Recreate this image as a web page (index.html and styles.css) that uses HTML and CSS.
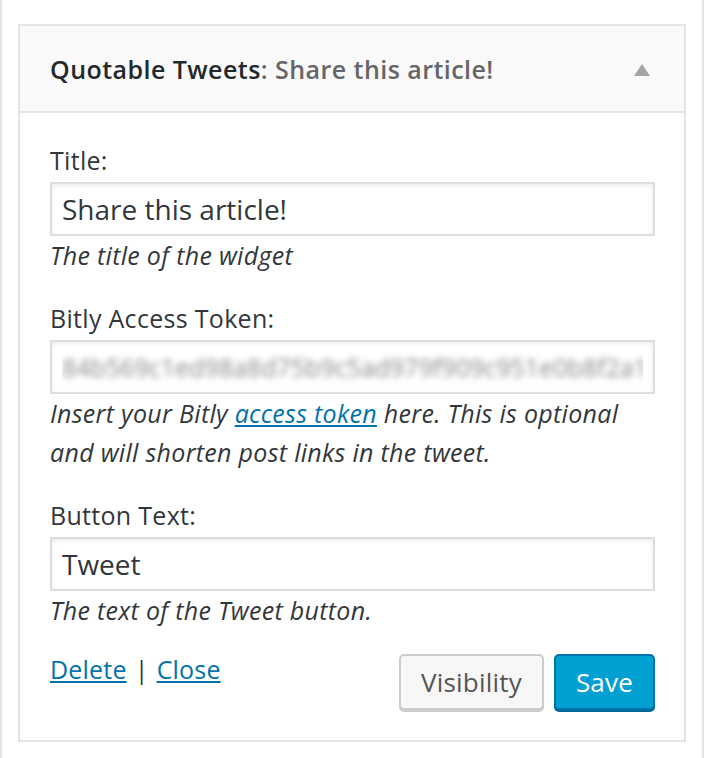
FILE: index.html
```html
<!DOCTYPE html>
<html>
<head>
<meta charset="utf-8">
<link rel="stylesheet" href="styles.css">
</head>
<body>
<div class="page">
  <div class="widget">
    <div class="widget-top">
      <h3 class="widget-title">Quotable Tweets<span class="in-title">: Share this article!</span></h3>
      <span class="arrow"></span>
    </div>
    <div class="widget-inside">
      <div class="field">
        <label class="label">Title:</label>
        <input class="input" type="text" value="Share this article!">
        <p class="desc">The title of the widget</p>
      </div>
      <div class="field">
        <label class="label">Bitly Access Token:</label>
        <input class="input input-blur" type="text" value="84b569c1ed98a8d75b9c5ad979f909c951e0b8f2a1c7e">
        <p class="desc">Insert your Bitly <a class="link" href="#">access token</a> here. This is optional and will shorten post links in the tweet.</p>
      </div>
      <div class="field">
        <label class="label">Button Text:</label>
        <input class="input" type="text" value="Tweet">
        <p class="desc">The text of the Tweet button.</p>
      </div>
      <div class="footer">
        <div class="links"><a class="link" href="#">Delete</a><span class="sep">|</span><a class="link" href="#">Close</a></div>
        <div class="buttons">
          <button class="btn">Visibility</button>
          <button class="btn btn-primary">Save</button>
        </div>
      </div>
    </div>
  </div>
</div>
</body>
</html>
```
FILE: styles.css
```css
html, body {
  margin: 0;
  padding: 0;
  background: #fff;
}
body {
  font-family: "Open Sans", "DejaVu Sans", sans-serif;
  color: #32373c;
}
.page {
  box-sizing: border-box;
  width: 704px;
  height: 758px;
  border-left: 2px solid #e5e5e5;
  border-right: 2px solid #e5e5e5;
  padding: 24px 16px 0 16px;
}
.widget {
  border: 2px solid #e5e5e5;
  background: #fff;
}
.widget-top {
  height: 85px;
  background: #f9f9f9;
  border-bottom: 2px solid #e5e5e5;
  display: flex;
  align-items: center;
  justify-content: space-between;
  padding: 0 34px 0 30px;
}
.widget-title {
  margin: 0;
  font-size: 25px;
  letter-spacing: 0.45px;
  line-height: 34px;
  font-weight: 600;
  color: #23282d;
}
.in-title {
  color: #666;
}
.arrow {
  width: 0;
  height: 0;
  border-left: 8px solid transparent;
  border-right: 8px solid transparent;
  border-bottom: 12px solid #a0a5aa;
  margin-top: 2px;
}
.widget-inside {
  padding: 28px 29px 30px 30px;
}
.field + .field {
  margin-top: 24px;
}
.label {
  display: block;
  font-size: 25px;
  letter-spacing: 0.3px;
  line-height: 39px;
  margin-bottom: 2px;
  color: #32373c;
}
.input {
  display: block;
  box-sizing: border-box;
  width: 100%;
  height: 54px;
  margin: 0;
  border: 2px solid #ddd;
  box-shadow: inset 0 2px 4px rgba(0, 0, 0, 0.07);
  padding: 0 10px;
  font-family: "Open Sans", sans-serif;
  font-size: 28px;
  color: #32373c;
  background: #fff;
  outline: none;
}
.input-blur {
  color: transparent;
  text-shadow: 0 0 6px rgba(110, 110, 110, 0.8);
  font-size: 25px;
}
.desc {
  margin: 0;
  font-style: italic;
  font-size: 25px;
  letter-spacing: 0.3px;
  line-height: 39px;
  color: #32373c;
}
.link {
  color: #0073aa;
  text-decoration: underline;
}
.footer {
  margin-top: 20px;
  display: flex;
  justify-content: space-between;
  align-items: flex-start;
}
.links {
  font-size: 25px;
  letter-spacing: 0.2px;
  line-height: 39px;
}
.sep {
  margin: 0 8px 0 8px;
}
.buttons {
  margin-top: 4px;
  display: flex;
  gap: 10px;
}
.btn {
  box-sizing: border-box;
  height: 56px;
  padding: 0 20px;
  border: 2px solid #ccc;
  border-radius: 5px;
  background: #f7f7f7;
  box-shadow: 0 2px 0 #ccc;
  color: #555;
  font-family: "Open Sans", sans-serif;
  font-size: 26px;
  letter-spacing: 0.2px;
  line-height: 52px;
}
.btn-primary {
  background: #00a0d2;
  border-color: #0073aa;
  box-shadow: 0 2px 0 #006799;
  color: #fff;
}
```
